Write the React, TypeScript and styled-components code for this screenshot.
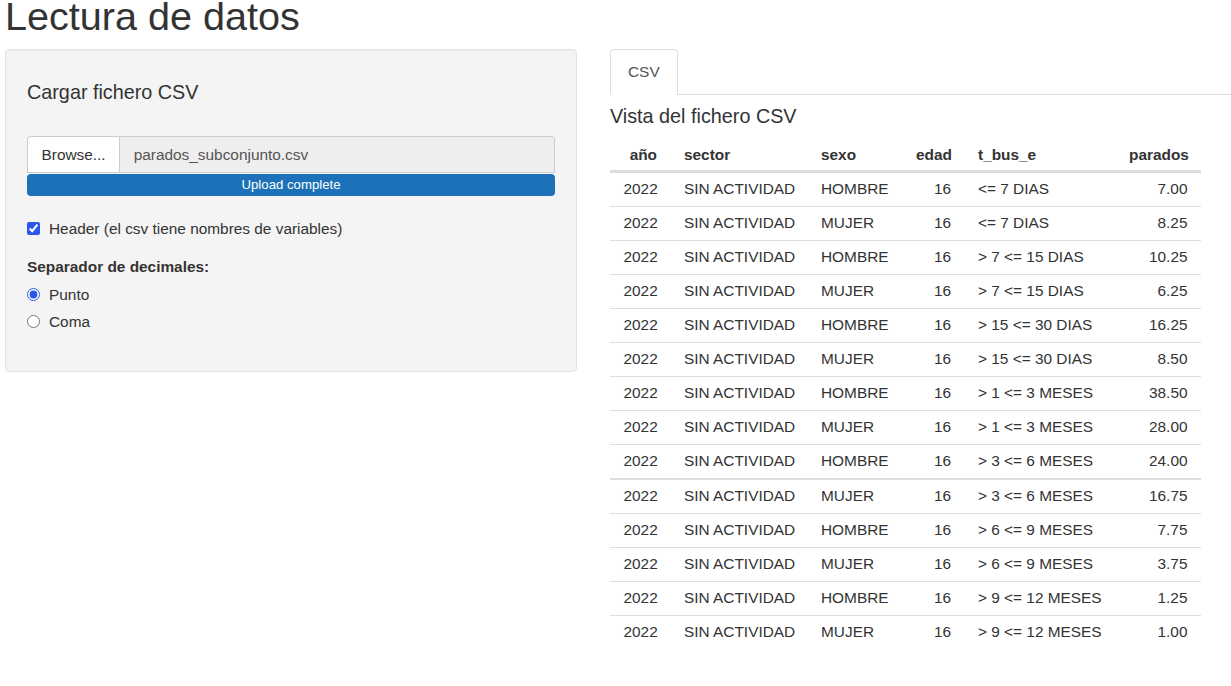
import React from "react";
import styled, { createGlobalStyle } from "styled-components";

const Global = createGlobalStyle`
  html, body { margin: 0; padding: 0; background: #fff; }
  body {
    font-family: "Liberation Sans", Arial, Helvetica, sans-serif;
    font-size: 15.4px;
    line-height: 21px;
    color: #333;
  }
  * { box-sizing: border-box; }
`;

const Page = styled.div`
  padding: 0 0 0 5px;
  overflow: hidden;
`;

const Title = styled.h1`
  margin: -5px 0 11px 0;
  font-size: 39.6px;
  font-weight: 400;
  line-height: 43px;
  color: #333;
`;

const Layout = styled.div`
  display: flex;
  align-items: flex-start;
  gap: 33px;
`;

const Well = styled.div`
  flex: 0 0 572px;
  background: #f4f4f4;
  border: 1px solid #e3e3e3;
  border-radius: 4px;
  padding: 19px 21px 19px 21px;
  box-shadow: inset 0 1px 1px rgba(0, 0, 0, 0.03);
`;

const SectionTitle = styled.h3<{ $top?: number }>`
  margin: ${(p) => p.$top ?? 12}px 0 0 0;
  font-size: 19.8px;
  font-weight: 400;
  line-height: 22px;
  color: #333;
`;

const InputGroup = styled.div`
  display: flex;
  margin-top: 33px;
  height: 37px;
`;

const BrowseButton = styled.span`
  display: flex;
  align-items: center;
  padding: 0 13.5px;
  background: #fff;
  border: 1px solid #ccc;
  border-right: none;
  border-radius: 4px 0 0 0;
  color: #333;
`;

const FileName = styled.span`
  flex: 1;
  display: flex;
  align-items: center;
  padding: 0 13.5px;
  background: #eee;
  border: 1px solid #ccc;
  border-radius: 0 4px 0 0;
  color: #555;
`;

const Progress = styled.div`
  height: 22px;
  margin-top: 1px;
  border-radius: 4px;
  background: #1c71b8;
  color: #fff;
  font-size: 13.2px;
  line-height: 22px;
  text-align: center;
`;

const CheckRow = styled.label<{ $top: number }>`
  display: flex;
  align-items: center;
  gap: 9px;
  margin-top: ${(p) => p.$top}px;
  line-height: 21px;
  cursor: pointer;
`;

const Box = styled.input`
  width: 13px;
  height: 13px;
  margin: 0;
  accent-color: #2a57e8;
`;

const FieldLabel = styled.div`
  margin-top: 17px;
  font-weight: 700;
  line-height: 21px;
`;

const RadioList = styled.div`
  display: flex;
  flex-direction: column;
  gap: 6px;
  margin: 7px 0 20px 0;
`;

const Main = styled.div`
  flex: 1;
  min-width: 0;
`;

const Tabs = styled.div`
  display: flex;
  border-bottom: 1px solid #ddd;
  height: 46px;
`;

const Tab = styled.div`
  height: 46px;
  padding: 0 17px 2px 17px;
  border: 1px solid #ddd;
  border-bottom-color: #fff;
  border-radius: 4px 4px 0 0;
  background: #fff;
  color: #555;
  display: flex;
  align-items: center;
  margin-bottom: -1px;
`;

const Table = styled.table`
  width: 591px;
  table-layout: fixed;
  border-collapse: separate;
  border-spacing: 0;
  margin-top: 11px;
`;

const Th = styled.th<{ $right?: boolean; $w: number }>`
  width: ${(p) => p.$w}px;
  padding: 6px 13.5px 5px 13.5px;
  line-height: 21px;
  font-weight: 700;
  text-align: ${(p) => (p.$right ? "right" : "left")};
  border-bottom: 2px solid #ddd;
  white-space: nowrap;
`;

const Td = styled.td<{ $right?: boolean; $thick?: boolean }>`
  padding: 5px 13.5px 7px 13.5px;
  line-height: 21px;
  text-align: ${(p) => (p.$right ? "right" : "left")};
  border-top: ${(p) => (p.$thick ? 2 : 1)}px solid #ddd;
  white-space: nowrap;
`;

const cols = [
  { name: "año", w: 60.5, right: true },
  { name: "sector", w: 137, right: false },
  { name: "sexo", w: 95, right: false },
  { name: "edad", w: 62, right: true },
  { name: "t_bus_e", w: 151, right: false },
  { name: "parados", w: 85.5, right: true },
];

const rows: [string, string, string][] = [
  ["HOMBRE", "<= 7 DIAS", "7.00"],
  ["MUJER", "<= 7 DIAS", "8.25"],
  ["HOMBRE", "> 7 <= 15 DIAS", "10.25"],
  ["MUJER", "> 7 <= 15 DIAS", "6.25"],
  ["HOMBRE", "> 15 <= 30 DIAS", "16.25"],
  ["MUJER", "> 15 <= 30 DIAS", "8.50"],
  ["HOMBRE", "> 1 <= 3 MESES", "38.50"],
  ["MUJER", "> 1 <= 3 MESES", "28.00"],
  ["HOMBRE", "> 3 <= 6 MESES", "24.00"],
  ["MUJER", "> 3 <= 6 MESES", "16.75"],
  ["HOMBRE", "> 6 <= 9 MESES", "7.75"],
  ["MUJER", "> 6 <= 9 MESES", "3.75"],
  ["HOMBRE", "> 9 <= 12 MESES", "1.25"],
  ["MUJER", "> 9 <= 12 MESES", "1.00"],
];

export default function App() {
  return (
    <Page>
      <Global />
      <Title>Lectura de datos</Title>
      <Layout>
        <Well>
          <SectionTitle>Cargar fichero CSV</SectionTitle>
          <InputGroup>
            <BrowseButton>Browse...</BrowseButton>
            <FileName>parados_subconjunto.csv</FileName>
          </InputGroup>
          <Progress>Upload complete</Progress>
          <CheckRow $top={22}>
            <Box type="checkbox" defaultChecked />
            Header (el csv tiene nombres de variables)
          </CheckRow>
          <FieldLabel>Separador de decimales:</FieldLabel>
          <RadioList>
            <CheckRow $top={0}>
              <Box type="radio" name="sep" defaultChecked />
              Punto
            </CheckRow>
            <CheckRow $top={0}>
              <Box type="radio" name="sep" />
              Coma
            </CheckRow>
          </RadioList>
        </Well>
        <Main>
          <Tabs>
            <Tab>CSV</Tab>
          </Tabs>
          <SectionTitle $top={10}>Vista del fichero CSV</SectionTitle>
          <Table>
            <thead>
              <tr>
                {cols.map((c) => (
                  <Th key={c.name} $w={c.w} $right={c.right}>
                    {c.name}
                  </Th>
                ))}
              </tr>
            </thead>
            <tbody>
              {rows.map((r, i) => (
                <tr key={i}>
                  <Td $right $thick={i === 9}>2022</Td>
                  <Td $thick={i === 9}>SIN ACTIVIDAD</Td>
                  <Td $thick={i === 9}>{r[0]}</Td>
                  <Td $right $thick={i === 9}>16</Td>
                  <Td $thick={i === 9}>{r[1]}</Td>
                  <Td $right $thick={i === 9}>{r[2]}</Td>
                </tr>
              ))}
            </tbody>
          </Table>
        </Main>
      </Layout>
    </Page>
  );
}
